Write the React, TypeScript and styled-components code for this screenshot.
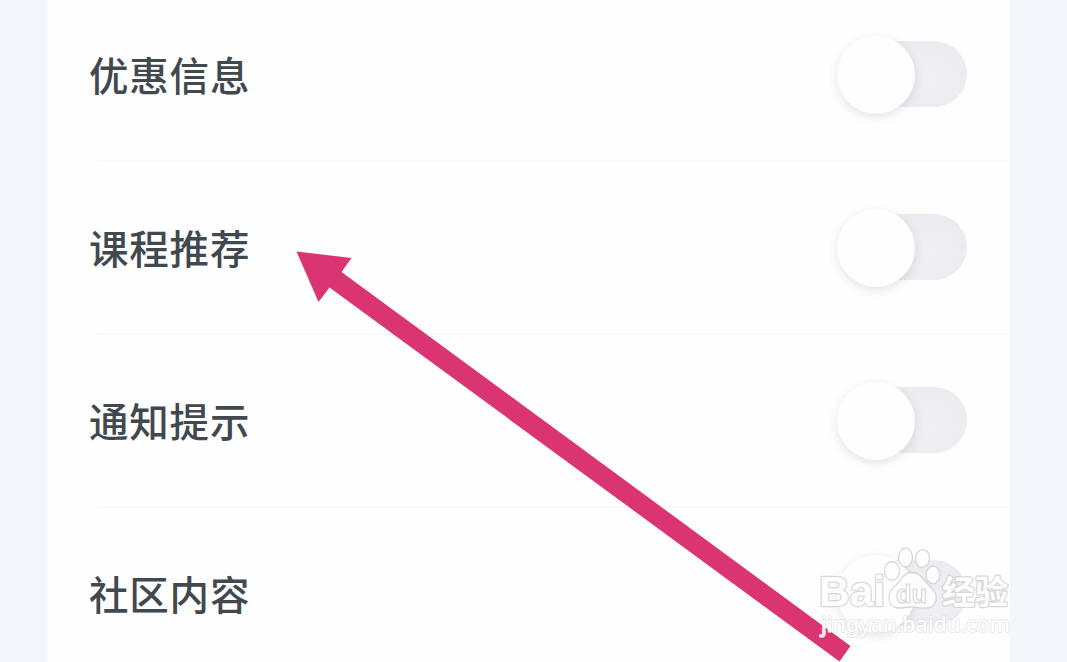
import React from 'react'
import styled, { createGlobalStyle } from 'styled-components'

const GlobalStyle = createGlobalStyle`
    body {
        margin: 0;
        background: #f4f6fb;
        overflow: hidden;
    }
`

const Page = styled.main`
    position: relative;
    height: 662px;
    padding: 0 57px 0 47px;
    box-sizing: border-box;
    overflow: hidden;
    font-family: "Noto Sans CJK SC", "Liberation Sans", sans-serif;
`

const Card = styled.section`
    height: 100%;
    background: #fefefe;
    overflow: hidden;
`

const List = styled.div`
    display: flex;
    flex-direction: column;
    margin-top: -11px;
`

const Row = styled.div`
    display: flex;
    flex: none;
    align-items: center;
    justify-content: space-between;
    box-sizing: border-box;
    height: 171px;
    padding: 0 43px 1px 42px;
`

const Divider = styled.hr`
    flex: none;
    height: 2px;
    margin: 0 2px 0 50px;
    border: 0;
    background: #f8f8f9;
`

const Label = styled.span`
    font-size: 39.5px;
    font-weight: 500;
    line-height: 60px;
    letter-spacing: 0.8px;
    color: #41484e;
`

const Switch = styled.div`
    display: flex;
    align-items: center;
    width: 126px;
    height: 66px;
    border-radius: 33px;
    background: radial-gradient(circle at 72% 60%, #f0f0f4 0%, #e6e6ec 80%);
`

const Knob = styled.div`
    flex: none;
    width: 78px;
    height: 78px;
    margin: 2px 0 0 -4px;
    border-radius: 50%;
    background: #fefefe;
    box-shadow: 0 3px 10px rgba(70, 74, 110, 0.14);
`

const Overlay = styled.svg`
    position: absolute;
    top: 0;
    left: 0;
    pointer-events: none;
`

const rows = [ '优惠信息', '课程推荐', '通知提示', '社区内容' ]

const SettingRow = ({ label }: { label: string }) => (
    <Row>
        <Label>{ label }</Label>
        <Switch>
            <Knob />
        </Switch>
    </Row>
)

const Arrow = () => (
    <polygon
        points="296.5,251.5 351.5,258 341.5,272 850.5,646 839.5,661.5 329.5,287.5 318.5,302"
        fill="#db3472"
    />
)

const Watermark = () => (
    <g fill="#fff" stroke="#d3d4d6" strokeWidth="1.6" strokeLinejoin="round" opacity="0.9">
        <g paintOrder="stroke" strokeWidth="2.4">
            <text x="819" y="606" fontFamily="Liberation Sans, sans-serif" fontSize="42" fontWeight="700" textLength="66" lengthAdjust="spacingAndGlyphs">Bai</text>
            <text x="942" y="604" fontFamily="Noto Sans CJK SC, sans-serif" fontSize="33" fontWeight="700" textLength="66">经验</text>
        </g>
        <g strokeWidth="1.3">
            <ellipse cx="892" cy="571" rx="7.5" ry="9.5" />
            <ellipse cx="905.5" cy="557.5" rx="7" ry="9.5" />
            <ellipse cx="922.5" cy="558.5" rx="7" ry="9" transform="rotate(8 922.5 558.5)" />
            <ellipse cx="933" cy="575" rx="7" ry="8.8" />
            <path d="M911 572.5C904 572.5 902 579 898 583C894 587 889 590 889 597C889 604 893 608 899 608C904 608 907 607 912 607C917 607 922 608.5 927 608C934 607.5 937 602 936 596C935 590 929 586 925 581C921 576 918 572.5 911 572.5Z" />
        </g>
        <text x="896" y="603" fontFamily="Liberation Sans, sans-serif" fontSize="25" fontWeight="700" strokeWidth="1.1" textLength="31" lengthAdjust="spacingAndGlyphs">du</text>
        <text x="821" y="632" paintOrder="stroke" fontFamily="Noto Sans, sans-serif" fontSize="21.5" fontWeight="500" stroke="#e0e1e3" strokeWidth="1.5" textLength="189" lengthAdjust="spacingAndGlyphs">jingyan.baidu.com</text>
    </g>
)

const App = () => {
    return (
        <Page>
            <GlobalStyle />
            <Card>
                <List>
                    { rows.map((label, index) => (
                        <React.Fragment key={ label }>
                            { index > 0 && <Divider /> }
                            <SettingRow label={ label } />
                        </React.Fragment>
                    )) }
                </List>
            </Card>
            <Overlay width="1067" height="662" viewBox="0 0 1067 662">
                <Arrow />
                <Watermark />
            </Overlay>
        </Page>
    )
}

export default App
